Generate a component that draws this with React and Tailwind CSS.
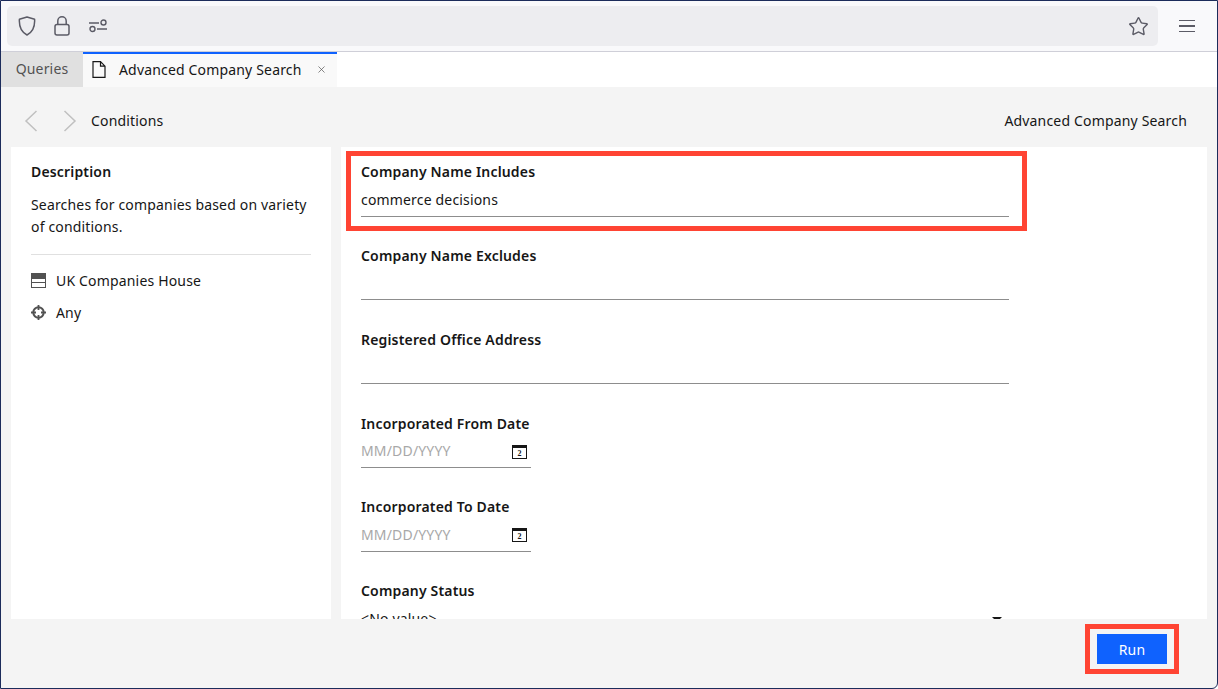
import { Star, X } from 'lucide-react';

const Field = ({ label, value, inputClass = 'h-[34px]', className = 'mb-[30px]' }) => (
    <div className={`w-[648px] ${className}`}>
        <div className="h-5 text-[14px] leading-5 font-semibold text-[#161616]">{label}</div>
        <div className={`${inputClass} pt-[8px] border-b border-[#8d8d8d] text-[14px] leading-5 text-[#161616]`}>{value}</div>
    </div>
);

const CalendarIcon = () => (
    <svg width="15" height="14" viewBox="0 0 15 14" className="shrink-0 mt-[2px]">
        <rect x="0.5" y="0.5" width="14" height="13" fill="#fff" stroke="#161616" />
        <rect x="0" y="0" width="15" height="3" fill="#161616" />
        <text x="7.5" y="11" textAnchor="middle" fontSize="8" fontWeight="700" fontFamily="Liberation Serif, serif" fill="#161616">2</text>
    </svg>
);

const DateField = ({ label, inputClass }) => (
    <div className="w-[170px] mb-[29px]">
        <div className="h-5 text-[14px] leading-5 font-semibold text-[#161616] whitespace-nowrap">{label}</div>
        <div className={`${inputClass} pr-[4px] flex items-center justify-between border-b border-[#8d8d8d] text-[14px] text-[#a8a8a8]`}>
            <span>MM/DD/YYYY</span>
            <CalendarIcon />
        </div>
    </div>
);

const App = () => {
    return (
        <div className="relative w-[1218px] h-[689px] flex flex-col overflow-hidden border border-[#1c2c5b] rounded-br-md bg-[#f4f4f4] tracking-[0.17px] font-['Noto_Sans',sans-serif]">
            <div className="h-[51px] shrink-0 flex items-center pl-[6px] bg-[#f9f9fb] border-b border-[#cfcfd8]">
                <div className="w-[1151px] h-[40px] flex items-center rounded-[5px] bg-[#ededf0] pl-[11px] pr-[9px] text-[#5b5b66]">
                    <svg width="18" height="20" viewBox="0 0 18 20" fill="none" stroke="currentColor" strokeWidth="1.5">
                        <path d="M9 1 16.6 3.2C17 9.5 15.5 15.6 9 19 2.500 15.600 1 9.500 1.400 3.200Z" strokeLinejoin="round" />
                    </svg>
                    <svg width="16" height="20" viewBox="0 0 16 20" fill="none" stroke="currentColor" strokeWidth="1.5" className="ml-[18px]">
                        <rect x="1" y="8.500" width="14" height="10.500" rx="2" />
                        <path d="M3.800 8.500V5a4.200 4.200 0 0 1 8.400 0v3.500" />
                    </svg>
                    <svg width="18" height="14" viewBox="0 0 18 14" fill="none" stroke="currentColor" strokeWidth="1.4" className="ml-[19px]">
                        <path d="M0 4h10M8 10h10" />
                        <circle cx="14.500" cy="3.500" r="2.500" />
                        <circle cx="3.500" cy="10" r="2.500" />
                    </svg>
                    <Star size={21} strokeWidth={1.6} className="ml-auto" />
                </div>
                <div className="ml-[21px] w-[16px] flex flex-col gap-[4px]">
                    <div className="h-[1.500px] bg-[#5b5b66]" />
                    <div className="h-[1.500px] bg-[#5b5b66]" />
                    <div className="h-[1.500px] bg-[#5b5b66]" />
                </div>
            </div>

            <div className="h-[35px] shrink-0 flex bg-white">
                <div className="w-[82px] flex items-center justify-center pb-[2px] bg-[#e0e0e0] text-[14px] text-[#525252]">Queries</div>
                <div className="w-[254px] flex items-center border-t-2 border-[#0f62fe] bg-[#f9f9f9] pl-[9px] pb-[3px] text-[14px] text-[#161616]">
                    <svg width="14" height="17" viewBox="0 0 14 17" fill="none" stroke="#161616" strokeWidth="1.200">
                        <path d="M1 .6h7.500L13 5.200V16.400H1ZM8.500 .6v4.600H13" />
                    </svg>
                    <span className="ml-[13px] whitespace-nowrap">Advanced Company Search</span>
                    <X size={11} strokeWidth={1.500} className="ml-auto mr-[10px] text-[#525252]" />
                </div>
            </div>

            <div className="h-[60px] shrink-0 flex items-center pt-[7px] pl-[23px] pr-[30px] text-[14px] text-[#161616]">
                <svg width="14" height="22" viewBox="0 0 14 22" fill="none" stroke="#c0c0c0" strokeWidth="1.500" className="mt-[1px]">
                    <path d="M12.500 1 2 11l10.500 10" />
                </svg>
                <svg width="14" height="22" viewBox="0 0 14 22" fill="none" stroke="#c0c0c0" strokeWidth="1.500" className="ml-[25px] mt-[1px]">
                    <path d="M1.500 1 12 11 1.500 21" />
                </svg>
                <span className="ml-[14px]">Conditions</span>
                <span className="ml-auto">Advanced Company Search</span>
            </div>

            <div className="flex-1 min-h-0 flex pl-[10px] pr-[10px] gap-[10px]">
                <div className="w-[320px] bg-white px-[20px] pt-[15px] text-[14px] text-[#161616]">
                    <div className="leading-5 font-semibold">Description</div>
                    <p className="mt-[12px] leading-[22px]">Searches for companies based on variety of conditions.</p>
                    <div className="mt-[16px] h-px bg-[#e0e0e0]" />
                    <div className="mt-[15px] h-5 flex items-center">
                        <svg width="15" height="15" viewBox="0 0 15 15" className="shrink-0">
                            <rect width="15" height="15" fill="#525252" />
                            <rect x="1" y="6" width="13" height="3" fill="#fff" />
                            <rect x="1" y="10" width="13" height="4" fill="#fff" />
                        </svg>
                        <span className="ml-[10px]">UK Companies House</span>
                    </div>
                    <div className="mt-[12px] h-5 flex items-center">
                        <svg width="15" height="15" viewBox="0 0 15 15" fill="none" stroke="#525252" className="shrink-0">
                            <circle cx="7.500" cy="7.500" r="5.200" strokeWidth="2" />
                            <path d="M7.500 0v5M7.500 10v5M0 7.500h5M10 7.500h5" strokeWidth="1.800" />
                        </svg>
                        <span className="ml-[10px]">Any</span>
                    </div>
                </div>
                <div className="flex-1 bg-white pl-[20px] pt-[15px] overflow-hidden">
                    <Field label="Company Name Includes" value="commerce decisions" inputClass="h-[35px]" className="mb-[29px]" />
                    <Field label="Company Name Excludes" />
                    <Field label="Registered Office Address" />
                    <DateField label="Incorporated From Date" inputClass="h-[34px]" />
                    <DateField label="Incorporated To Date" inputClass="h-[35px]" />
                    <div className="w-[648px]">
                        <div className="h-5 text-[14px] leading-5 font-semibold text-[#161616]">Company Status</div>
                        <div className="h-[35px] pt-[8px] flex justify-between text-[14px] leading-5 text-[#161616]">
                            <span>&lt;No value&gt;</span>
                            <span className="mt-[8px] mr-[7px] w-0 h-0 border-x-[5px] border-x-transparent border-t-[5px] border-t-[#161616]" />
                        </div>
                    </div>
                </div>
            </div>

            <div className="h-[69px] shrink-0 flex justify-end items-start pt-[15px] pr-[50px]">
                <button className="w-[70px] h-[30px] bg-[#0f62fe] text-white text-[14px]">Run</button>
            </div>

            <div className="absolute left-[345px] top-[150px] w-[681px] h-[80px] border-[5px] border-[#ff4433]" />
            <div className="absolute left-[1084px] top-[623px] w-[94px] h-[50px] border-[5px] border-[#ff4433]" />
        </div>
    );
};

export default App;
